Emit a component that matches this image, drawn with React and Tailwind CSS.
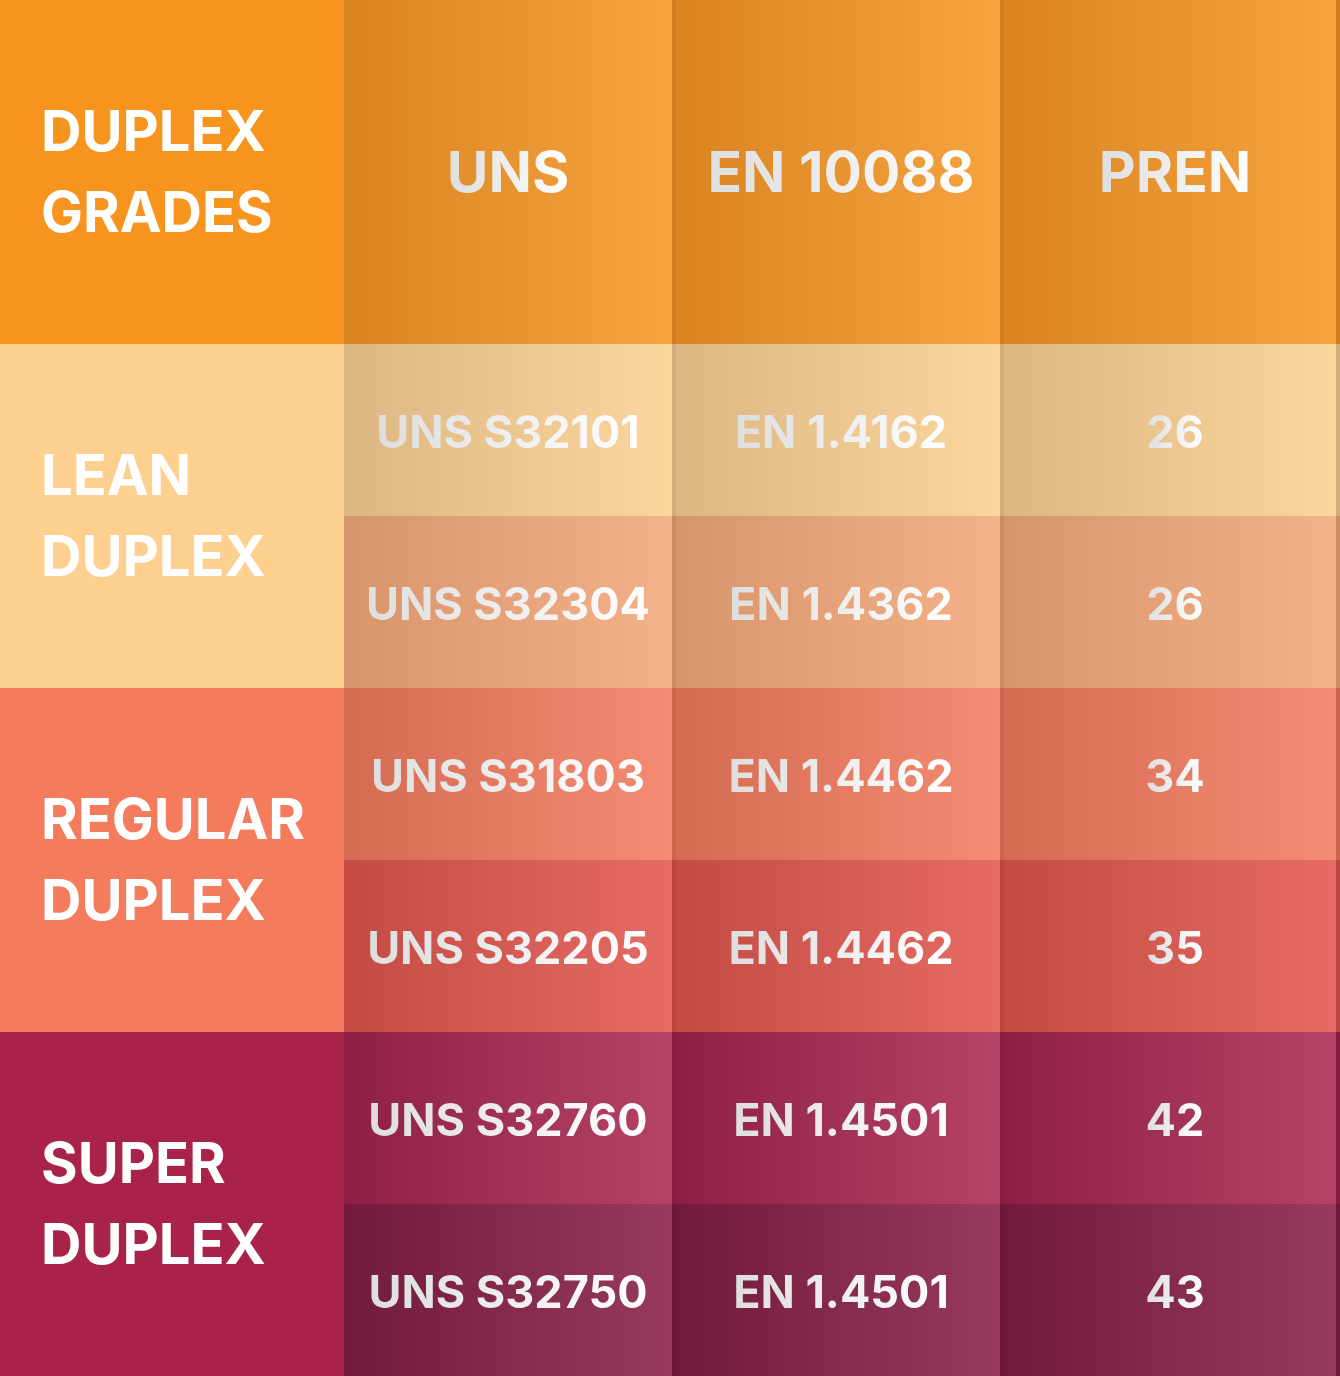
import React from 'react';

const groups = [
  {
    name: ['LEAN', 'DUPLEX'],
    side: 'bg-[#fdd08f]',
    rows: [
      { uns: 'UNS S32101', en: 'EN 1.4162', pren: '26', bg: 'bg-gradient-to-r from-[#ddb782] to-[#fbd69d]' },
      { uns: 'UNS S32304', en: 'EN 1.4362', pren: '26', bg: 'bg-gradient-to-r from-[#d8946a] to-[#f5b189]' },
    ],
  },
  {
    name: ['REGULAR', 'DUPLEX'],
    side: 'bg-[#f47b5c]',
    rows: [
      { uns: 'UNS S31803', en: 'EN 1.4462', pren: '34', bg: 'bg-gradient-to-r from-[#d56b51] to-[#f48c73]' },
      { uns: 'UNS S32205', en: 'EN 1.4462', pren: '35', bg: 'bg-gradient-to-r from-[#c44a44] to-[#e66b65]' },
    ],
  },
  {
    name: ['SUPER', 'DUPLEX'],
    side: 'bg-[#a9224a]',
    rows: [
      { uns: 'UNS S32760', en: 'EN 1.4501', pren: '42', bg: 'bg-gradient-to-r from-[#8e1f44] to-[#b54366]' },
      { uns: 'UNS S32750', en: 'EN 1.4501', pren: '43', bg: 'bg-gradient-to-r from-[#721a3c] to-[#973a5d]' },
    ],
  },
];

// small per-column nudges so the text sits where the reference has it
const pads = ['', 'pl-[6px]', 'pl-[10px]'];

const Cell = ({ bg, pad, children }) => (
  <div className={`${bg} ${pad} h-[172px] flex items-center justify-center pt-1 border-r-4 border-black/5`}>
    <span className="bg-gradient-to-r from-[#dedede] to-white bg-clip-text text-transparent font-bold text-[45px]">
      {children}
    </span>
  </div>
);

export default function App() {
  return (
    <div className="w-[1340px] h-[1376px] overflow-hidden" style={{ fontFamily: 'Inter, "Liberation Sans", sans-serif' }}>
      <div className="grid grid-cols-[344px_332px_328px_336px]">
        {/* header */}
        <div className="bg-[#f7941e] h-[344px] flex flex-col justify-center pl-[41px] text-white font-bold text-[56px] leading-[81px]">
          <span>DUPLEX</span>
          <span>GRADES</span>
        </div>
        {['UNS', 'EN 10088', 'PREN'].map((h, i) => (
          <div
            key={h}
            className={`${pads[i]} h-[344px] flex items-center justify-center bg-gradient-to-r from-[#d9841f] to-[#f6a43f] border-r-4 border-black/5`}
          >
            <span className="bg-gradient-to-r from-[#dedede] to-white bg-clip-text text-transparent font-bold text-[57px]">
              {h}
            </span>
          </div>
        ))}

        {groups.map((g) => (
          <React.Fragment key={g.name.join(' ')}>
            <div className={`${g.side} row-span-2 h-[344px] flex flex-col justify-center pl-[41px] text-white font-bold text-[56px] leading-[81px]`}>
              <span>{g.name[0]}</span>
              <span>{g.name[1]}</span>
            </div>
            {g.rows.map((r) => (
              <React.Fragment key={r.uns}>
                <Cell bg={r.bg} pad={pads[0]}>{r.uns}</Cell>
                <Cell bg={r.bg} pad={pads[1]}>{r.en}</Cell>
                <Cell bg={r.bg} pad={pads[2]}>{r.pren}</Cell>
              </React.Fragment>
            ))}
          </React.Fragment>
        ))}
      </div>
    </div>
  );
}
